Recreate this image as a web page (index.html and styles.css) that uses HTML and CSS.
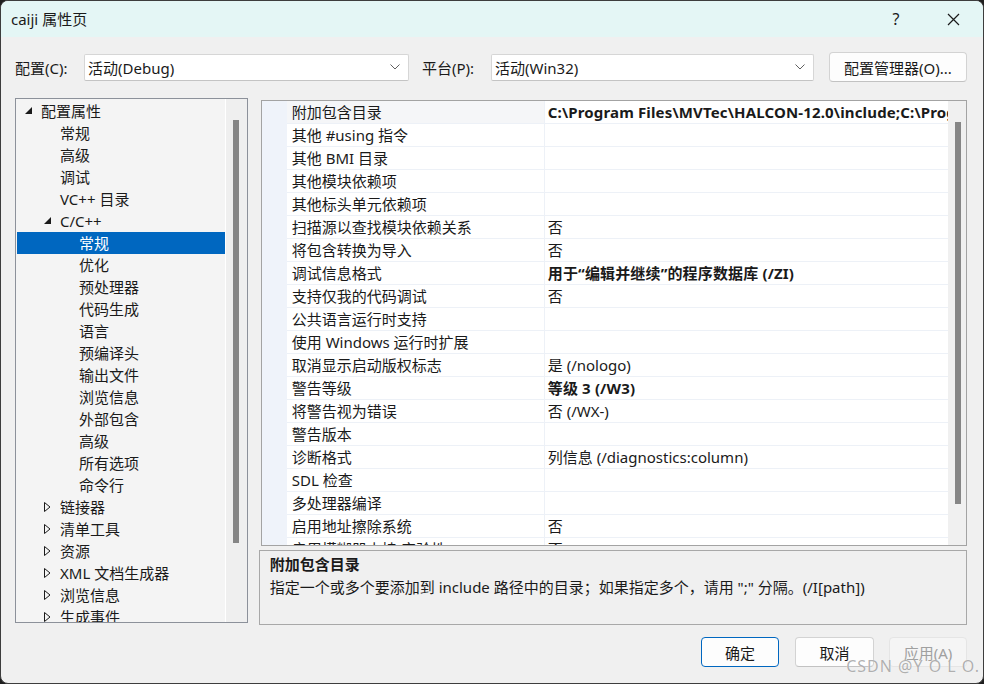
FILE: index.html
```html
<!DOCTYPE html>
<html lang="zh-CN">
<head>
  <meta charset="UTF-8">
  <title>caiji 属性页</title>
  <link rel="stylesheet" href="styles.css">
</head>
<body>
  <div class="window">
    <div class="titlebar">
      <span class="title">caiji 属性页</span>
      <span class="help">?</span>
      <span class="close">
        <svg width="13" height="13" viewBox="0 0 13 13"><path d="M1 1 L12 12 M12 1 L1 12" stroke="#1a1a1a" stroke-width="1.2" fill="none"/></svg>
      </span>
    </div>
    <div class="content">
      <div class="config-row">
        <label class="field-label">配置(C):</label>
        <div class="combo combo-config">
          <span>活动(Debug)</span>
          <svg class="chevron" width="10" height="6" viewBox="0 0 10 6"><path d="M0.5 0.5 L5 5 L9.5 0.5" stroke="#606060" stroke-width="1" fill="none"/></svg>
        </div>
        <label class="field-label platform-label">平台(P):</label>
        <div class="combo combo-platform">
          <span>活动(Win32)</span>
          <svg class="chevron" width="10" height="6" viewBox="0 0 10 6"><path d="M0.5 0.5 L5 5 L9.5 0.5" stroke="#606060" stroke-width="1" fill="none"/></svg>
        </div>
        <button class="btn btn-manager">配置管理器(O)...</button>
      </div>

      <div class="main">
        <div class="tree">
          <ul class="tree-list">
            <li class="lvl0"><span class="twisty"><svg width="8" height="8" viewBox="0 0 8 8"><polygon points="7,0 7,7 0,7" fill="#1a1a1a"/></svg></span>配置属性</li>
            <li class="lvl1"><span class="twisty"></span>常规</li>
            <li class="lvl1"><span class="twisty"></span>高级</li>
            <li class="lvl1"><span class="twisty"></span>调试</li>
            <li class="lvl1"><span class="twisty"></span>VC++ 目录</li>
            <li class="lvl1"><span class="twisty"><svg width="8" height="8" viewBox="0 0 8 8"><polygon points="7,0 7,7 0,7" fill="#1a1a1a"/></svg></span>C/C++</li>
            <li class="lvl2 selected"><span class="twisty"></span>常规</li>
            <li class="lvl2"><span class="twisty"></span>优化</li>
            <li class="lvl2"><span class="twisty"></span>预处理器</li>
            <li class="lvl2"><span class="twisty"></span>代码生成</li>
            <li class="lvl2"><span class="twisty"></span>语言</li>
            <li class="lvl2"><span class="twisty"></span>预编译头</li>
            <li class="lvl2"><span class="twisty"></span>输出文件</li>
            <li class="lvl2"><span class="twisty"></span>浏览信息</li>
            <li class="lvl2"><span class="twisty"></span>外部包含</li>
            <li class="lvl2"><span class="twisty"></span>高级</li>
            <li class="lvl2"><span class="twisty"></span>所有选项</li>
            <li class="lvl2"><span class="twisty"></span>命令行</li>
            <li class="lvl1"><span class="twisty"><svg width="7" height="10" viewBox="0 0 7 10"><polygon points="0.5,0.5 6,5 0.5,9.5" fill="none" stroke="#1a1a1a" stroke-width="1"/></svg></span>链接器</li>
            <li class="lvl1"><span class="twisty"><svg width="7" height="10" viewBox="0 0 7 10"><polygon points="0.5,0.5 6,5 0.5,9.5" fill="none" stroke="#1a1a1a" stroke-width="1"/></svg></span>清单工具</li>
            <li class="lvl1"><span class="twisty"><svg width="7" height="10" viewBox="0 0 7 10"><polygon points="0.5,0.5 6,5 0.5,9.5" fill="none" stroke="#1a1a1a" stroke-width="1"/></svg></span>资源</li>
            <li class="lvl1"><span class="twisty"><svg width="7" height="10" viewBox="0 0 7 10"><polygon points="0.5,0.5 6,5 0.5,9.5" fill="none" stroke="#1a1a1a" stroke-width="1"/></svg></span>XML 文档生成器</li>
            <li class="lvl1"><span class="twisty"><svg width="7" height="10" viewBox="0 0 7 10"><polygon points="0.5,0.5 6,5 0.5,9.5" fill="none" stroke="#1a1a1a" stroke-width="1"/></svg></span>浏览信息</li>
            <li class="lvl1"><span class="twisty"><svg width="7" height="10" viewBox="0 0 7 10"><polygon points="0.5,0.5 6,5 0.5,9.5" fill="none" stroke="#1a1a1a" stroke-width="1"/></svg></span>生成事件</li>
          </ul>
          <div class="vscroll tree-scroll"><div class="thumb"></div></div>
        </div>

        <div class="right">
          <div class="grid">
            <div class="grid-rows">
              <div class="row current"><span class="gutter"></span><span class="name">附加包含目录</span><span class="value bold">C:\Program Files\MVTec\HALCON-12.0\include;C:\Program Files\MVTec\HALCON-12.0\include\halconcpp;%(AdditionalIncludeDirectories)</span></div>
              <div class="row"><span class="gutter"></span><span class="name">其他 #using 指令</span><span class="value"></span></div>
              <div class="row"><span class="gutter"></span><span class="name">其他 BMI 目录</span><span class="value"></span></div>
              <div class="row"><span class="gutter"></span><span class="name">其他模块依赖项</span><span class="value"></span></div>
              <div class="row"><span class="gutter"></span><span class="name">其他标头单元依赖项</span><span class="value"></span></div>
              <div class="row"><span class="gutter"></span><span class="name">扫描源以查找模块依赖关系</span><span class="value">否</span></div>
              <div class="row"><span class="gutter"></span><span class="name">将包含转换为导入</span><span class="value">否</span></div>
              <div class="row"><span class="gutter"></span><span class="name">调试信息格式</span><span class="value bold">用于“编辑并继续”的程序数据库 (/ZI)</span></div>
              <div class="row"><span class="gutter"></span><span class="name">支持仅我的代码调试</span><span class="value">否</span></div>
              <div class="row"><span class="gutter"></span><span class="name">公共语言运行时支持</span><span class="value"></span></div>
              <div class="row"><span class="gutter"></span><span class="name">使用 Windows 运行时扩展</span><span class="value"></span></div>
              <div class="row"><span class="gutter"></span><span class="name">取消显示启动版权标志</span><span class="value">是 (/nologo)</span></div>
              <div class="row"><span class="gutter"></span><span class="name">警告等级</span><span class="value bold">等级 3 (/W3)</span></div>
              <div class="row"><span class="gutter"></span><span class="name">将警告视为错误</span><span class="value">否 (/WX-)</span></div>
              <div class="row"><span class="gutter"></span><span class="name">警告版本</span><span class="value"></span></div>
              <div class="row"><span class="gutter"></span><span class="name">诊断格式</span><span class="value">列信息 (/diagnostics:column)</span></div>
              <div class="row"><span class="gutter"></span><span class="name">SDL 检查</span><span class="value"></span></div>
              <div class="row"><span class="gutter"></span><span class="name">多处理器编译</span><span class="value"></span></div>
              <div class="row"><span class="gutter"></span><span class="name">启用地址擦除系统</span><span class="value">否</span></div>
              <div class="row"><span class="gutter"></span><span class="name">启用模糊器支持(实验性)</span><span class="value">否</span></div>
            </div>
            <div class="vscroll grid-scroll"><div class="thumb"></div></div>
          </div>
          <div class="desc">
            <div class="desc-title">附加包含目录</div>
            <div class="desc-text">指定一个或多个要添加到 include 路径中的目录；如果指定多个，请用 ";" 分隔。(/I[path])</div>
          </div>
        </div>
      </div>

      <div class="footer">
        <button class="btn btn-ok">确定</button>
        <button class="btn btn-cancel">取消</button>
        <button class="btn btn-apply" disabled>应用(A)</button>
      </div>
    </div>
    <div class="watermark">CSDN @Y O L O.</div>
  </div>
</body>
</html>
```

FILE: styles.css
```css
html, body {
  margin: 0;
  padding: 0;
  background: #1f1f1f;
}
body {
  font-family: 'Segoe UI', 'Noto Sans', 'Noto Sans CJK SC', sans-serif;
  font-size: 15px;
  color: #1a1a1a;
}
.window {
  position: relative;
  box-sizing: border-box;
  width: 984px;
  height: 684px;
  border: 1px solid #3d3d3d;
  border-radius: 8px;
  background: #f0f0f0;
  overflow: hidden;
}
.titlebar {
  height: 36px;
  background: #e4f6f5;
  display: flex;
  align-items: center;
  padding-left: 10px;
}
.title {
  flex: 1;
  line-height: 36px;
}
.help {
  width: 20px;
  text-align: center;
  font-size: 16px;
  margin-right: 37px;
}
.close {
  width: 20px;
  display: flex;
  justify-content: center;
  margin-right: 20px;
}
.content {
  padding: 0 16px 0 14px;
}
.config-row {
  margin-top: 15px;
  height: 30px;
  display: flex;
  align-items: center;
}
.field-label {
  width: 69px;
  flex: none;
}
.platform-label {
  margin-left: 13px;
}
.combo {
  box-sizing: border-box;
  height: 27px;
  background: #fff;
  border: 1px solid #d6d6d6;
  border-bottom-color: #c4c4c4;
  border-radius: 2px;
  display: flex;
  align-items: center;
  padding-left: 3px;
  padding-right: 8px;
}
.combo span {
  flex: 1;
}
.combo-config {
  width: 325px;
}
.combo-platform {
  width: 323px;
}
.btn {
  font-family: inherit;
  font-size: 15px;
  color: #1a1a1a;
  background: #fdfdfd;
  border: 1px solid #d3d3d3;
  border-bottom-color: #c2c2c2;
  border-radius: 4px;
  height: 30px;
  padding: 0;
}
.btn-manager {
  width: 138px;
  margin-left: 15px;
}
.main {
  margin-top: 16px;
  display: flex;
}
.tree {
  box-sizing: border-box;
  width: 233px;
  height: 525px;
  border: 1px solid #8c919a;
  background: #f4f4f4;
  display: flex;
  overflow: hidden;
}
.tree-list {
  list-style: none;
  margin: 1px 0 0 1px;
  padding: 0;
  width: 208px;
}
.tree-list li {
  height: 22px;
  line-height: 22px;
  display: flex;
  align-items: center;
  white-space: nowrap;
}
.twisty {
  width: 16px;
  flex: none;
  display: flex;
  align-items: center;
}
.lvl0 { padding-left: 8px; }
.lvl1 { padding-left: 27px; }
.lvl2 { padding-left: 46px; }
.tree-list li.selected {
  background: #0067c0;
  color: #fff;
}
.vscroll {
  position: relative;
  background: #efefef;
}
.thumb {
  position: absolute;
  width: 6px;
  background: #868686;
}
.tree-scroll {
  width: 21px;
  border-left: 1px solid #fff;
}
.tree-scroll .thumb {
  left: 7px;
  top: 21px;
  height: 423px;
}
.right {
  margin-left: 11px;
  width: 709px;
}
.grid {
  box-sizing: border-box;
  margin: 2px 0 0 2px;
  height: 446px;
  border: 1px solid #a3a3a3;
  display: flex;
  overflow: hidden;
  background: #fff;
}
.grid-rows {
  width: 686px;
  flex: none;
}
.row {
  display: grid;
  grid-template-columns: 25px 258px 1fr;
  height: 23px;
}
.row span {
  box-sizing: border-box;
  line-height: 22px;
  white-space: nowrap;
  overflow: hidden;
}
.gutter {
  background: #eff3fa;
}
.name {
  padding-left: 5px;
  border-bottom: 1px solid #edf1f7;
  border-right: 1px solid #edf1f7;
}
.value {
  padding-left: 3px;
  border-bottom: 1px solid #edf1f7;
}
.row.current .name {
  background: #f5f6f8;
}
.bold {
  font-weight: 700;
}
.value.bold {
  letter-spacing: 0.15px;
}
.grid-scroll {
  flex: 1;
  background: #f0f0f0;
}
.grid-scroll .thumb {
  left: 7px;
  top: 21px;
  height: 382px;
}
.desc {
  box-sizing: border-box;
  margin-top: 4px;
  height: 75px;
  border: 1px solid #a8a8a8;
  padding: 2px 10px 0;
}
.desc-title {
  font-weight: 700;
  line-height: 22px;
}
.desc-text {
  line-height: 24px;
}
.footer {
  margin-top: 12px;
  display: flex;
  justify-content: flex-end;
}
.btn-ok {
  width: 78px;
  border: 1px solid #0067c0;
}
.btn-cancel {
  width: 79px;
  margin-left: 16px;
}
.btn-apply {
  width: 78px;
  margin-left: 15px;
  background: #f5f5f5;
  border-color: #e5e5e5;
  color: #a0a0a0;
}
.watermark {
  position: absolute;
  right: 3px;
  bottom: 6px;
  font-size: 16px;
  color: rgba(150, 150, 150, 0.75);
  letter-spacing: 1px;
  text-shadow: 0 0 1px #fff;
}
```
